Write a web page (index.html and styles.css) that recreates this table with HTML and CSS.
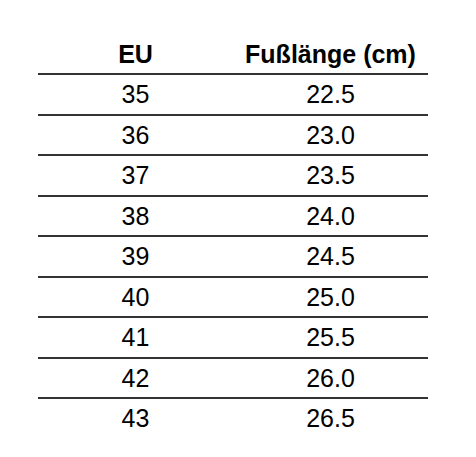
FILE: index.html
```html
<!DOCTYPE html>
<html lang="de">
<head>
<meta charset="utf-8">
<link rel="stylesheet" href="styles.css">
</head>
<body>
<div class="size-table">
  <div class="row head"><div class="cell">EU</div><div class="cell">Fußlänge (cm)</div></div>
  <div class="row"><div class="cell">35</div><div class="cell">22.5</div></div>
  <div class="row"><div class="cell">36</div><div class="cell">23.0</div></div>
  <div class="row"><div class="cell">37</div><div class="cell">23.5</div></div>
  <div class="row"><div class="cell">38</div><div class="cell">24.0</div></div>
  <div class="row"><div class="cell">39</div><div class="cell">24.5</div></div>
  <div class="row"><div class="cell">40</div><div class="cell">25.0</div></div>
  <div class="row"><div class="cell">41</div><div class="cell">25.5</div></div>
  <div class="row"><div class="cell">42</div><div class="cell">26.0</div></div>
  <div class="row last"><div class="cell">43</div><div class="cell">26.5</div></div>
</div>
</body>
</html>
```
FILE: styles.css
```css
html, body {
  margin: 0;
  padding: 0;
  background: #ffffff;
}
body {
  font-family: "Liberation Sans", Arial, sans-serif;
  color: #000000;
}
.size-table {
  margin-left: 38px;
  padding-top: 34.5px;
  width: 390px;
}
.row {
  display: grid;
  grid-template-columns: 1fr 1fr;
  height: 38.5px;
  line-height: 38.5px;
  font-size: 25px;
  border-bottom: 2px solid #333333;
}
.row.last {
  border-bottom: none;
}
.cell {
  text-align: center;
  white-space: nowrap;
}
.head {
  font-weight: bold;
}
```
